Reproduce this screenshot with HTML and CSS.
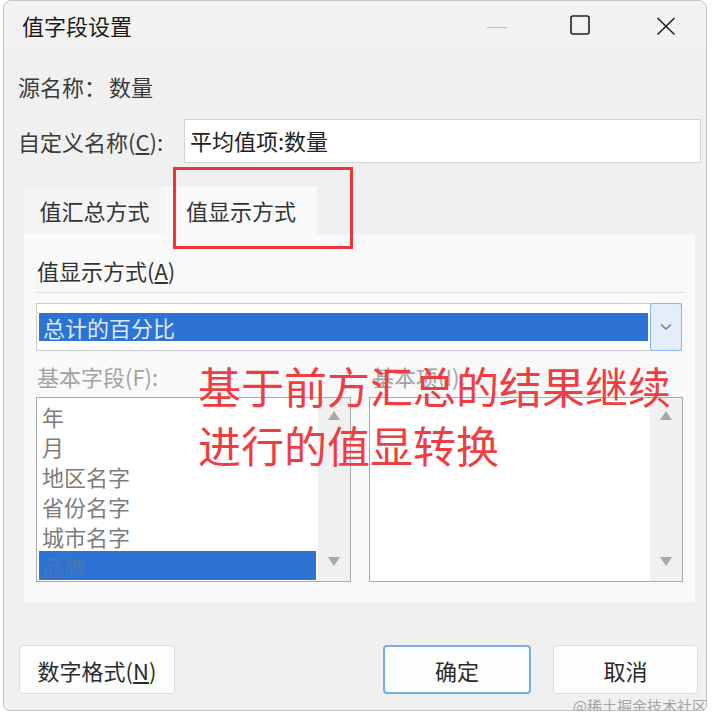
FILE: index.html
```html
<!DOCTYPE html>
<html lang="zh-CN">
<head>
<meta charset="utf-8">
<title>值字段设置</title>
<link rel="stylesheet" href="styles.css">
</head>
<body>
<div class="window">
  <div class="titlebar">
    <div class="title">值字段设置</div>
    <svg class="ctl ctl-min" width="20" height="20" viewBox="0 0 20 20"><line x1="0" y1="10.5" x2="20" y2="10.5" stroke="#c4c4c4" stroke-width="1.3"/></svg>
    <svg class="ctl ctl-max" width="20" height="20" viewBox="0 0 20 20"><rect x="1" y="1" width="18" height="18" rx="2" fill="none" stroke="#202020" stroke-width="1.6"/></svg>
    <svg class="ctl ctl-close" width="20" height="20" viewBox="0 0 20 20"><path d="M1.5 2 L18.5 18.5 M18.5 2 L1.5 18.5" stroke="#202020" stroke-width="1.6" fill="none"/></svg>
  </div>

  <div class="row source">
    <span>源名称：</span><span class="srcval">数量</span>
  </div>

  <div class="row namerow">
    <div class="namelabel">自定义名称(<u>C</u>):</div>
    <div class="input">平均值项:数量</div>
  </div>

  <div class="tabs">
    <div class="tab">值汇总方式</div>
    <div class="tab active">值显示方式</div>
  </div>

  <div class="panel">
    <div class="plabel">值显示方式(<u>A</u>)</div>
    <div class="sep"></div>
    <div class="combo">
      <div class="combosel">总计的百分比</div>
      <div class="combobtn">
        <svg width="12" height="8" viewBox="0 0 12 8"><polyline points="1,1.5 6,6 11,1.5" fill="none" stroke="#7a7f86" stroke-width="1.6"/></svg>
      </div>
    </div>
    <div class="lrow">
      <div class="dlabel">基本字段(F):</div>
      <div class="dlabel right">基本项(I):</div>
    </div>
    <div class="lists">
      <div class="listbox">
        <div class="items">
          <div class="item">年</div>
          <div class="item">月</div>
          <div class="item">地区名字</div>
          <div class="item">省份名字</div>
          <div class="item">城市名字</div>
          <div class="item sel">品牌</div>
        </div>
        <div class="scroll">
          <svg width="12" height="9" viewBox="0 0 12 9"><polygon points="6,0 12,9 0,9" fill="#a9a9a9"/></svg>
          <svg width="12" height="9" viewBox="0 0 12 9"><polygon points="0,0 12,0 6,9" fill="#a9a9a9"/></svg>
        </div>
      </div>
      <div class="listbox">
        <div class="items"></div>
        <div class="scroll">
          <svg width="12" height="9" viewBox="0 0 12 9"><polygon points="6,0 12,9 0,9" fill="#a9a9a9"/></svg>
          <svg width="12" height="9" viewBox="0 0 12 9"><polygon points="0,0 12,0 6,9" fill="#a9a9a9"/></svg>
        </div>
      </div>
    </div>
  </div>

  <div class="buttons">
    <div class="btn btn-num">数字格式(<u>N</u>)</div>
    <div class="btn btn-ok">确定</div>
    <div class="btn btn-cancel">取消</div>
  </div>

  <div class="redbox"></div>
  <div class="note">基于前方汇总的结果继续<br>进行的值显转换</div>
  <div class="watermark">@稀土掘金技术社区</div>
</div>
</body>
</html>
```

FILE: styles.css
```css
html, body {
  margin: 0;
  padding: 0;
  background: #ffffff;
}
body {
  font-family: "Noto Sans CJK SC", "Noto Sans", sans-serif;
  font-size: 22px;
  line-height: 30px;
  color: #333333;
}
.window {
  position: relative;
  margin-left: 3px;
  width: 704px;
  height: 711px;
  box-sizing: border-box;
  border: 1px solid #c2c2c2;
  border-radius: 8px 8px 6px 6px;
  background: #f0f0f0;
  display: flex;
  flex-direction: column;
}
.titlebar {
  height: 48px;
  display: flex;
  align-items: center;
  padding: 0 30px 0 18px;
  background: #f2f2f2;
  border-radius: 8px 8px 0 0;
}
.title {
  color: #1b1b1b;
  font-size: 22px;
}
.ctl { display: block; flex: none; }
.ctl-min { margin-left: auto; margin-top: 3px; }
.ctl-max { margin-left: 63px; }
.ctl-close { margin-left: 66px; margin-top: 2px; }

.row { padding-left: 14px; }
.source {
  margin-top: 22px;
  height: 30px;
  color: #3a3a3a;
  display: flex;
}
.srcval { margin-left: 3px; }

.namerow {
  margin-top: 18px;
  display: flex;
  align-items: center;
  color: #3a3a3a;
}
.namelabel { width: 166px; }
.input {
  width: 517px;
  height: 44px;
  box-sizing: border-box;
  border: 1px solid #d4d4d4;
  background: #ffffff;
  padding-left: 5px;
  line-height: 40px;
  color: #222222;
}

.tabs {
  margin-top: 23px;
  padding-left: 20px;
  display: flex;
  align-items: flex-end;
  height: 48px;
}
.tab {
  width: 141px;
  height: 47px;
  background: #f4f4f4;
  text-align: center;
  line-height: 46px;
  color: #333333;
}
.tab.active {
  width: 152px;
  height: 48px;
  background: #f9f9f9;
  line-height: 48px;
}

.panel {
  margin: 0 11px 0 20px;
  padding: 21px 13px 20px 12px;
  background: #f9f9f9;
}
.plabel {
  padding-left: 1px;
  color: #333333;
}
.sep {
  margin-top: 7px;
  margin-right: -4px;
  height: 1px;
  background: #e3e3e3;
}
.combo {
  margin-top: 10px;
  height: 48px;
  box-sizing: border-box;
  border: 1px solid #c9c9c9;
  background: #ffffff;
  display: flex;
  align-items: center;
}
.combosel {
  flex: 1;
  margin: 0 2px 0 2px;
  height: 28px;
  line-height: 28px;
  background: #2d73d3;
  color: #dde8f8;
  padding-left: 4px;
}
.combobtn {
  width: 32px;
  height: 48px;
  box-sizing: border-box;
  margin: -1px -1px -1px 0;
  border: 1.5px solid #86b8ea;
  border-radius: 3px;
  background: #e4eefa;
  display: flex;
  align-items: center;
  justify-content: center;
}
.combobtn svg { display: block; }

.lrow {
  margin-top: 10px;
  display: grid;
  grid-template-columns: 315px 314px;
  column-gap: 18px;
}
.dlabel {
  color: #a3a3a3;
  padding-left: 1px;
}
.dlabel.right { padding-left: 3px; }

.lists {
  margin-top: 6px;
  display: grid;
  grid-template-columns: 315px 314px;
  column-gap: 18px;
}
.listbox {
  height: 185px;
  box-sizing: border-box;
  border: 1px solid #aaaaaa;
  background: #ffffff;
  display: flex;
}
.items {
  flex: 1;
  padding: 3px 2px 0 2px;
}
.item {
  height: 30px;
  line-height: 30px;
  padding-left: 3px;
  color: #7c7c7c;
}
.item.sel {
  background: #2d73d3;
  color: #4a74b4;
  height: 29px;
}
.scroll {
  width: 32px;
  background: #f0f0f0;
  display: flex;
  flex-direction: column;
  align-items: center;
  justify-content: space-between;
  padding: 13px 0 15px 0;
}
.scroll svg { display: block; }

.buttons {
  margin-top: 43px;
  display: flex;
  padding: 0 8px 0 15px;
}
.btn {
  height: 49px;
  box-sizing: border-box;
  border: 1px solid #dddddd;
  border-radius: 4px;
  background: #fdfdfd;
  color: #2b2b2b;
  display: flex;
  align-items: center;
  justify-content: center;
}
.btn-num { width: 156px; }
.btn-ok {
  width: 148px;
  margin-left: auto;
  border: 2px solid #74aee4;
}
.btn-cancel {
  width: 145px;
  margin-left: 22px;
}

.redbox {
  position: absolute;
  left: 169px;
  top: 166px;
  width: 180px;
  height: 82px;
  box-sizing: border-box;
  border: 3px solid #ec3539;
}
.note {
  position: absolute;
  left: 194px;
  top: 355px;
  font-size: 43px;
  line-height: 59px;
  color: #ef3d42;
  white-space: nowrap;
}
.watermark {
  position: absolute;
  right: -1px;
  top: 696px;
  font-size: 15px;
  line-height: 18px;
  color: #a4a4a4;
  white-space: nowrap;
}
```
